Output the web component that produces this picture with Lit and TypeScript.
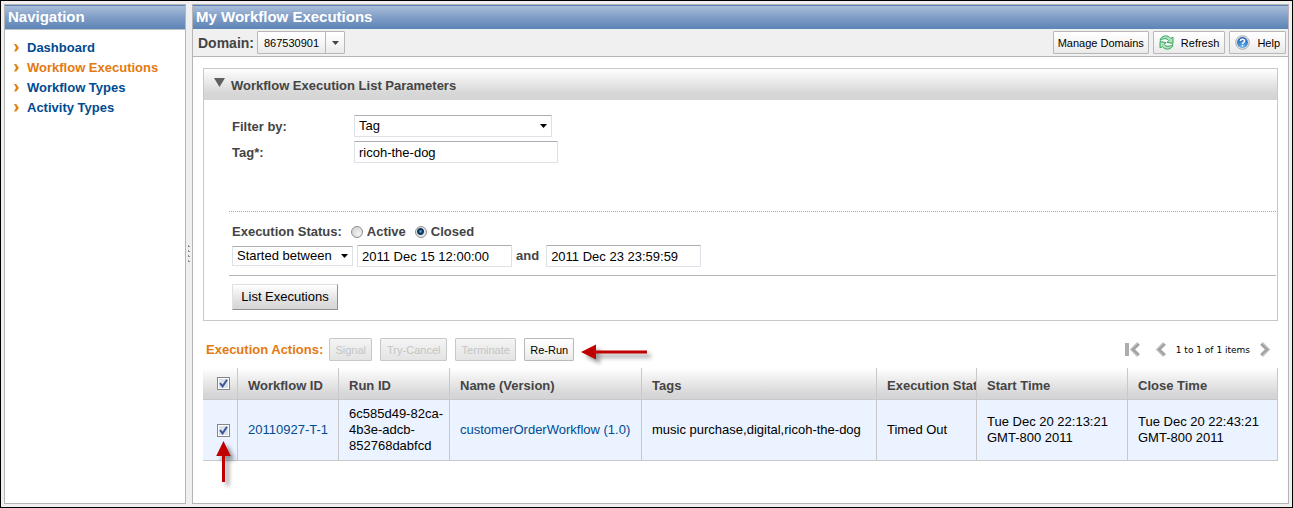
import { LitElement, html, css, svg } from "lit";
import { customElement, state } from "lit/decorators.js";

interface Execution {
  id: string;
  runId: string;
  name: string;
  tags: string;
  status: string;
  start: string;
  close: string;
}

const EXECUTIONS: Execution[] = [
  {
    id: "20110927-T-1",
    runId: "6c585d49-82ca-4b3e-adcb-852768dabfcd",
    name: "customerOrderWorkflow (1.0)",
    tags: "music purchase,digital,ricoh-the-dog",
    status: "Timed Out",
    start: "Tue Dec 20 22:13:21 GMT-800 2011",
    close: "Tue Dec 20 22:43:21 GMT-800 2011",
  },
];

const NAV = ["Dashboard", "Workflow Executions", "Workflow Types", "Activity Types"];

const caret = html`<svg class="caret" width="7" height="4" viewBox="0 0 7 4"><path d="M0 0h7L3.5 4z" fill="currentColor" /></svg>`;

const chevron = svg`<path d="M9.5 1.5L3.5 7.5l6 6" fill="none" stroke="#c4c4c4" stroke-width="4" /><path d="M9.8 2L4 7.5l5.8 5.5" fill="none" stroke="#a2a2a2" stroke-width="2.4" />`;

@customElement("app-root")
export class AppRoot extends LitElement {
  static styles = css`
    :host {
      display: block;
      font: 13px/16px "Liberation Sans", Arial, sans-serif;
      color: #000;
    }
    * {
      box-sizing: border-box;
    }
    button,
    input,
    select {
      font: inherit;
      color: #000;
      margin: 0;
      border-radius: 0;
    }
    svg {
      display: block;
      flex: none;
    }
    a {
      color: #004b91;
      text-decoration: none;
    }
    .frame {
      min-height: 100vh;
      display: flex;
      border: 1px solid #000;
      background: #f0eff0;
      padding: 3px;
    }
    .panel {
      border: 1px solid #b5b5b5;
      background: #fff;
      display: flex;
      flex-direction: column;
    }
    .side {
      flex: none;
      width: 182px;
    }
    .splitter {
      flex: none;
      width: 6px;
      display: flex;
      align-items: center;
      justify-content: center;
    }
    .main {
      flex: 1;
      min-width: 0;
    }
    .title {
      margin: 0;
      height: 24px;
      padding: 0 3px;
      font-size: 15px;
      line-height: 22px;
      font-weight: bold;
      color: #fff;
      border-top: 1px solid #5b82b5;
      background: linear-gradient(#a9bdd9, #7f9dc6 50%, #5c84b6);
      white-space: nowrap;
    }
    .side .title {
      border-bottom: 1px solid #c0c0c0;
      height: 25px;
    }
    .nav {
      list-style: none;
      margin: 0;
      padding: 8px 9px;
    }
    .nav li {
      display: flex;
      align-items: center;
      gap: 8px;
      height: 20px;
      font-weight: bold;
      white-space: nowrap;
    }
    .current,
    .actions-label {
      color: #e47911;
    }
    .toolbar {
      display: flex;
      align-items: center;
      gap: 4px;
      height: 28px;
      padding: 0 2px 0 5px;
      background: #f0f0f0;
      border-bottom: 1px solid #b5b5b5;
    }
    .domain-label {
      font-size: 14px;
      font-weight: bold;
      color: #444;
      margin-right: -1px;
    }
    .grow {
      flex: 1;
    }
    .btn {
      display: flex;
      align-items: center;
      justify-content: center;
      height: 23px;
      padding: 0 4px;
      font-size: 11px;
      border: 1px solid #b8b8b8;
      border-radius: 1px;
      background: linear-gradient(#fff, #f4f4f4 60%, #e9e9e9);
      white-space: nowrap;
    }
    .btn:disabled {
      color: #c4c4c4;
      border-color: #c8c8c8;
      background: linear-gradient(#f4f4f4, #e4e4e4);
    }
    .icon-btn {
      gap: 7px;
      padding: 0 5px;
    }
    .stack {
      display: grid;
      align-items: center;
      justify-items: end;
    }
    .stack > * {
      grid-area: 1 / 1;
    }
    .stack svg {
      pointer-events: none;
    }
    .stack select {
      width: 100%;
      appearance: none;
      outline: none;
    }
    .caret {
      margin-right: 5px;
    }
    .domain {
      width: 88px;
    }
    .domain .btn {
      padding: 0 6px;
    }
    .domain-arrow {
      height: 21px;
      width: 20px;
      display: grid;
      place-items: center;
      border-left: 1px solid #b8b8b8;
      color: #444;
      pointer-events: none;
    }
    .domain-arrow .caret {
      margin: 0;
    }
    .content {
      padding: 11px 10px 20px;
    }
    .params {
      border: 1px solid #c8c8c8;
    }
    .params-head {
      display: flex;
      align-items: center;
      gap: 6px;
      margin: 0;
      height: 31px;
      padding: 0 10px;
      font-size: 13px;
      color: #444;
      background: linear-gradient(#fff, #d8d8d8 75%, #d4d4d6);
    }
    .params-head svg {
      margin-bottom: 4px;
    }
    .params-head span {
      padding-top: 2px;
    }
    .params-body {
      padding: 15px 1px 10px 25px;
    }
    .filters {
      display: grid;
      grid-template-columns: 122px 1fr;
      row-gap: 4px;
      align-items: center;
      padding: 0 3px 48px;
      border-bottom: 1px dotted #aaa;
    }
    .label {
      font-weight: bold;
      color: #444;
    }
    .filters .label {
      padding-top: 2px;
    }
    .field {
      height: 22px;
      padding: 0 4px;
      border: 1px solid #dde1e8;
      border-top-color: #abadb3;
      border-radius: 1px;
      background: #fff;
      outline: none;
    }
    .by {
      width: 198px;
    }
    .tag {
      width: 204px;
    }
    .date {
      width: 155px;
    }
    .when {
      width: 121px;
    }
    .when .field {
      height: 20px;
    }
    .status {
      display: flex;
      align-items: center;
      padding: 10px 3px 0;
      height: 29px;
    }
    .radio {
      display: flex;
      align-items: center;
      gap: 4px;
      margin-left: 9px;
    }
    .round {
      appearance: none;
      width: 12px;
      height: 12px;
      border: 1px solid #8e8f8f;
      border-radius: 50%;
      background: radial-gradient(circle at 70% 70%, #f4f4f4, #c9ccd0);
    }
    .round:checked {
      background: radial-gradient(circle at 45% 45%, #5fc3ec 0, #12385c 2px, #12385c 3px, #e4e6e8 4px);
    }
    .range {
      display: flex;
      align-items: center;
      gap: 4px;
      padding: 4px 3px 8px;
      border-bottom: 1px solid #b5b5b5;
    }
    .and {
      margin-right: 3px;
    }
    .list {
      margin: 8px 3px 0;
      height: 26px;
      width: 106px;
      padding: 0;
      border: 1px solid;
      border-color: #e0e0e0 #8f8f8f #8f8f8f #e0e0e0;
      background: linear-gradient(#fff, #dedede 70%, #d6d6d6);
      white-space: nowrap;
    }
    .actions {
      display: flex;
      align-items: center;
      gap: 8px;
      padding: 17px 7px 7px 3px;
    }
    .actions-label {
      font-weight: bold;
      margin-right: -2px;
    }
    .w43 {
      width: 43px;
    }
    .w67 {
      width: 67px;
    }
    .w61 {
      width: 61px;
    }
    .w50 {
      width: 50px;
    }
    .pager {
      display: flex;
      align-items: center;
      gap: 9px;
      font: 9px/12px "DejaVu Sans", Verdana, sans-serif;
    }
    .page {
      padding: 0;
      border: 0;
      background: none;
    }
    .first {
      margin-right: 5px;
    }
    .grid {
      width: 100%;
      table-layout: fixed;
      border-collapse: separate;
      border-spacing: 0;
    }
    .grid th,
    .grid td {
      text-align: left;
      padding: 0 5px 0 10px;
      border-right: 1px solid #c8c8c8;
      border-bottom: 1px solid #c8c8c8;
      overflow: hidden;
    }
    .grid th {
      height: 32px;
      padding-top: 4px;
      color: #444;
      white-space: nowrap;
      background: linear-gradient(#fff, #d6d6d8 85%, #d4d4d6);
    }
    .grid td {
      height: 61px;
      background: #eaf3ff;
    }
    .grid .pick {
      padding: 0;
      overflow: visible;
    }
    .tick {
      display: grid;
      place-items: center;
      width: 13px;
      height: 13px;
      margin-left: 14px;
    }
    .tick > * {
      grid-area: 1 / 1;
    }
    .tick svg {
      pointer-events: none;
    }
    .box {
      appearance: none;
      display: block;
      width: 13px;
      height: 13px;
      border: 1px solid #858688;
      background: #fff;
      box-shadow: inset 0 0 0 1px #fff, inset 0 0 0 9px #dde2ea;
    }
    .box:not(:checked) + svg {
      visibility: hidden;
    }
    .c-pick {
      width: 35px;
    }
    .c-id {
      width: 101px;
    }
    .c-run {
      width: 111px;
    }
    .c-name {
      width: 192px;
    }
    .c-status {
      width: 100px;
    }
    .c-start {
      width: 151px;
    }
    .c-close {
      width: 150px;
    }
    .anchor {
      position: relative;
    }
    .pointer {
      position: absolute;
      pointer-events: none;
      filter: drop-shadow(4px 4px 2px rgba(0, 0, 0, 0.4));
    }
    .pointer-left {
      left: 57px;
      top: 6px;
    }
    .pointer-up {
      left: -1px;
      top: 17px;
    }
  `;

  @state() private selected = new Set<string>(EXECUTIONS.map((e) => e.id));

  private toggle(id: string) {
    const next = new Set(this.selected);
    next.has(id) ? next.delete(id) : next.add(id);
    this.selected = next;
  }

  private toggleAll() {
    this.selected = this.selected.size ? new Set() : new Set(EXECUTIONS.map((e) => e.id));
  }

  private tick(label: string, checked: boolean, onChange: () => void) {
    return html`<input class="box" type="checkbox" aria-label=${label} .checked=${checked} @change=${onChange} />
      <svg width="9" height="9" viewBox="0 0 9 9"><path d="M1 4.2L3.6 7.4 8 .8" fill="none" stroke="#3c5799" stroke-width="2" /></svg>`;
  }

  private nav() {
    return html`<nav class="panel side">
      <h2 class="title">Navigation</h2>
      <ul class="nav">
        ${NAV.map(
          (n) => html`<li>
            <svg width="5" height="8" viewBox="0 0 5 8"><path d="M0 0h2.2L4.6 3.2V4.4L2.2 7.6H0L2 3.8z" fill="#e08214" /></svg>
            <a class=${n === "Workflow Executions" ? "current" : ""} href="#">${n}</a>
          </li>`
        )}
      </ul>
    </nav>`;
  }

  private toolbar() {
    return html`<div class="toolbar">
      <label class="domain-label" for="domain">Domain:</label>
      <div class="stack domain">
        <select class="btn" id="domain"><option>867530901</option></select>
        <span class="domain-arrow">${caret}</span>
      </div>
      <span class="grow"></span>
      <button class="btn">Manage Domains</button>
      <button class="btn icon-btn">
        <svg width="15" height="15" viewBox="0 0 15 15">
          <g fill="#a9e6bd" stroke="#3aa35f" stroke-width="1" stroke-linejoin="round">
            <path d="M1 5.4C1.6 2 5.6 -.2 9.2 1.4 10.4 2 11 2.6 11.6 3.4L14 2.2V8.4L8 7.4 9.8 5.6C8 3 4.4 3.2 1 5.4z" />
            <path d="M14 9.6C13.4 13 9.4 15.2 5.8 13.6 4.6 13 4 12.4 3.4 11.6L1 12.8V6.6L7 7.6 5.2 9.4C7 12 10.6 11.8 14 9.6z" />
          </g>
        </svg>
        Refresh
      </button>
      <button class="btn icon-btn">
        <svg width="15" height="15" viewBox="0 0 15 15">
          <defs><radialGradient id="ball" cx=".5" cy=".85" r=".8"><stop offset="0" stop-color="#6ab8f0" /><stop offset="1" stop-color="#1c5fb4" /></radialGradient></defs>
          <circle cx="7.5" cy="7.5" r="6.8" fill="#e6e8ec" stroke="#a8abb2" />
          <circle cx="7.5" cy="7.5" r="5.4" fill="url(#ball)" />
          <path d="M5.4 6.1C5.4 3.6 9.6 3.6 9.6 6 9.6 7.4 7.6 7.3 7.5 8.9M7.5 9.9v1.5" fill="none" stroke="#fff" stroke-width="1.5" />
        </svg>
        Help
      </button>
    </div>`;
  }

  private params() {
    return html`<section class="params">
      <h3 class="params-head">
        <svg width="11" height="9" viewBox="0 0 11 9"><path d="M0 0h11L5.5 9z" fill="#606060" /></svg>
        <span>Workflow Execution List Parameters</span>
      </h3>
      <div class="params-body">
        <div class="filters">
          <label class="label" for="by">Filter by:</label>
          <div class="stack by">
            <select class="field" id="by"><option>Tag</option></select>
            ${caret}
          </div>
          <label class="label" for="tag">Tag*:</label>
          <input class="field tag" id="tag" type="text" value="ricoh-the-dog" />
        </div>
        <div class="status label">
          <span>Execution Status:</span>
          <label class="radio"><input class="round" type="radio" name="status" />Active</label>
          <label class="radio"><input class="round" type="radio" name="status" checked />Closed</label>
        </div>
        <div class="range">
          <div class="stack when">
            <select class="field" aria-label="Date filter"><option>Started between</option></select>
            ${caret}
          </div>
          <input class="field date" type="text" aria-label="From" value="2011 Dec 15 12:00:00" />
          <span class="label and">and</span>
          <input class="field date" type="text" aria-label="To" value="2011 Dec 23 23:59:59" />
        </div>
        <button class="list">List Executions</button>
      </div>
    </section>`;
  }

  private actions() {
    return html`<div class="actions">
      <span class="actions-label">Execution Actions:</span>
      <button class="btn w43" disabled>Signal</button>
      <button class="btn w67" disabled>Try-Cancel</button>
      <button class="btn w61" disabled>Terminate</button>
      <div class="anchor">
        <button class="btn w50">Re-Run</button>
        <svg class="pointer pointer-left" width="66" height="16" viewBox="0 0 66 16"><path d="M0 8L15 .5V6.5H66V9.5H15V15.5z" fill="#c00000" /></svg>
      </div>
      <span class="grow"></span>
      <div class="pager">
        <button class="page first" aria-label="First page">
          <svg width="16" height="15" viewBox="0 0 16 15"><path d="M0 1h4v13H0z" fill="#adadad" /><g transform="translate(4 0)">${chevron}</g></svg>
        </button>
        <button class="page" aria-label="Previous page"><svg width="12" height="15" viewBox="0 0 12 15">${chevron}</svg></button>
        <span>1 to 1 of 1 items</span>
        <button class="page" aria-label="Next page"><svg width="12" height="15" viewBox="0 0 12 15"><g transform="matrix(-1 0 0 1 12 0)">${chevron}</g></svg></button>
      </div>
    </div>`;
  }

  private table() {
    return html`<table class="grid">
      <colgroup>
        <col class="c-pick" /><col class="c-id" /><col class="c-run" /><col class="c-name" /><col />
        <col class="c-status" /><col class="c-start" /><col class="c-close" />
      </colgroup>
      <thead>
        <tr>
          <th class="pick">
            <div class="tick">${this.tick("Select all", this.selected.size > 0, () => this.toggleAll())}</div>
          </th>
          <th>Workflow ID</th>
          <th>Run ID</th>
          <th>Name (Version)</th>
          <th>Tags</th>
          <th>Execution Status</th>
          <th>Start Time</th>
          <th>Close Time</th>
        </tr>
      </thead>
      <tbody>
        ${EXECUTIONS.map(
          (e) => html`<tr>
            <td class="pick">
              <div class="tick anchor">
                ${this.tick(`Select ${e.id}`, this.selected.has(e.id), () => this.toggle(e.id))}
                <svg class="pointer pointer-up" width="15" height="41" viewBox="0 0 15 41"><path d="M7.5 0L14.8 15H9V41H6V15H.2z" fill="#c00000" /></svg>
              </div>
            </td>
            <td><a href="#">${e.id}</a></td>
            <td>${e.runId}</td>
            <td><a href="#">${e.name}</a></td>
            <td>${e.tags}</td>
            <td>${e.status}</td>
            <td>${e.start}</td>
            <td>${e.close}</td>
          </tr>`
        )}
      </tbody>
    </table>`;
  }

  render() {
    return html`<div class="frame">
      ${this.nav()}
      <div class="splitter">
        <svg width="3" height="18" viewBox="0 0 3 18">
          ${[0, 5, 10, 15].map((y) => svg`<path d="M0 ${y}h1v1h1v1H0z" fill="#8c8c8c" /><path d="M1 ${y}h1v1H1z" fill="#fff" />`)}
        </svg>
      </div>
      <main class="panel main">
        <h1 class="title">My Workflow Executions</h1>
        ${this.toolbar()}
        <div class="content">${this.params()} ${this.actions()} ${this.table()}</div>
      </main>
    </div>`;
  }
}
